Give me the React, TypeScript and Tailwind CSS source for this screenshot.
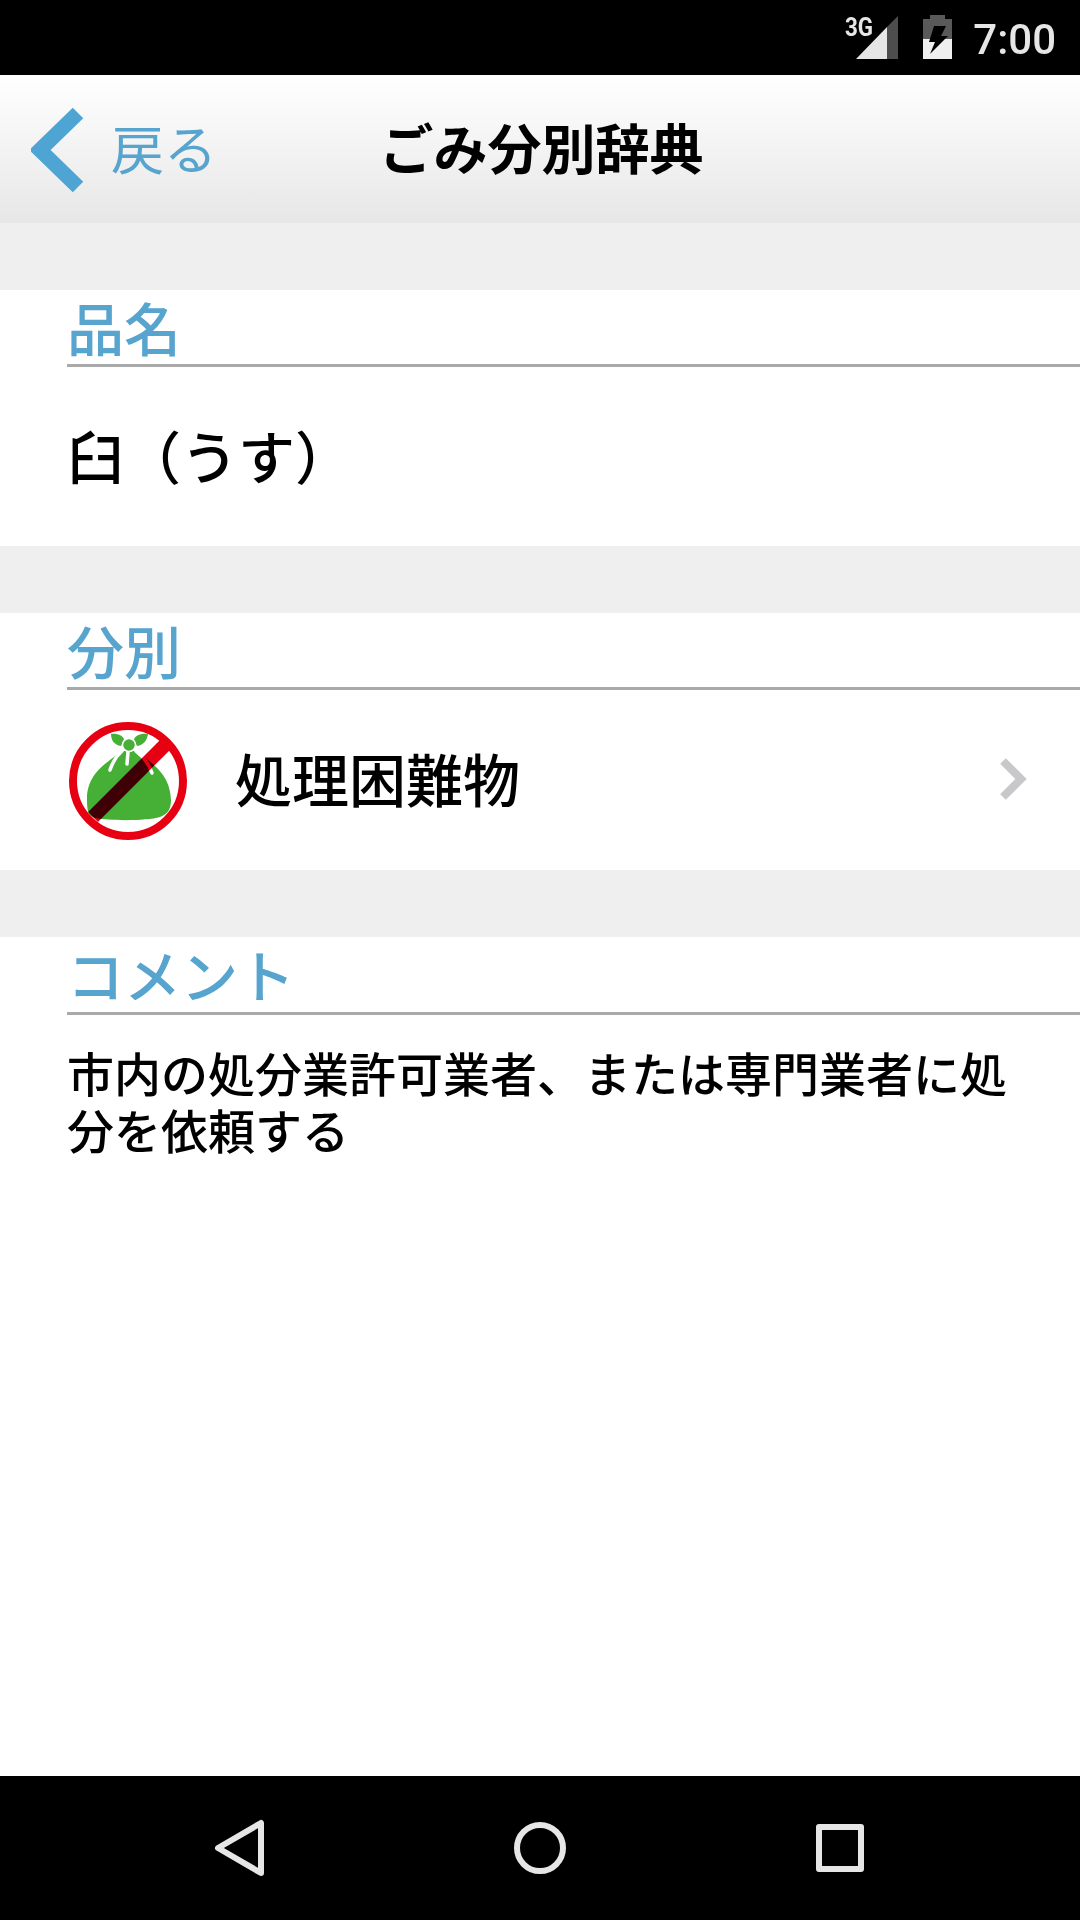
import type { ReactNode } from 'react';

interface SectionProps {
  title: string;
  children: ReactNode;
  className?: string;
}

function StatusBar() {
  return (
    <div className="flex h-[75px] shrink-0 items-start justify-end bg-black pr-[24px] font-['Roboto',sans-serif] text-[#e6e6e6]">
      <span className="mt-[14px] origin-left scale-x-[0.86] text-[26px] leading-[26px] font-bold">3G</span>
      <svg className="-ml-[21px] mt-[16px]" width="42" height="43" viewBox="0 0 42 43">
        <path d="M31 11 42 0V43H31Z" fill="#4d4d4d" />
        <path d="M0 43 31 11V43Z" fill="#e6e6e6" />
      </svg>
      <svg className="ml-[25px] mt-[15px]" width="29" height="44" viewBox="0 0 29 44">
        <path d="M7 0H22V4H29V24H0V4H7Z" fill="#595959" />
        <path d="M0 24H29V44H0Z" fill="#efefef" />
        <path d="M11 11H23L18 21H25L7 39L12 27H6Z" fill="#000" />
      </svg>
      <span className="ml-[21px] mt-[15px] text-[42px] leading-[50px] font-medium">7:00</span>
    </div>
  );
}

function Header() {
  return (
    <header className="grid h-[148px] shrink-0 grid-cols-[1fr_auto_1fr] items-center bg-linear-to-b from-white to-[#e7e7e7]">
      <button className="flex items-center text-[#57a4cf]">
        <svg className="ml-[31px] mt-[2px]" width="54" height="86" viewBox="0 0 54 86">
          <path d="M47 6 9 43 47 80" fill="none" stroke="#4ea5d3" strokeWidth="15" />
        </svg>
        <span className="ml-[26px] -mt-[3px] text-[53px] leading-none">戻る</span>
      </button>
      <h1 className="-mt-[5px] pl-[3px] text-[54px] leading-none font-bold">ごみ分別辞典</h1>
    </header>
  );
}

function Section({ title, children, className }: SectionProps) {
  return (
    <section className={className}>
      <div className="h-[67px] bg-[#efefef]" />
      <h2 className="ml-[67px] border-b-[3px] border-[#a9a9a9] pt-[8px] pb-[10px] text-[57px] leading-[56px] font-medium text-[#57a4cf]">
        {title}
      </h2>
      {children}
    </section>
  );
}

// Garbage bag with a prohibition sign over it
function UnprocessableIcon() {
  return (
    <svg className="-mt-px" width="120" height="120" viewBox="0 0 120 120">
      <circle cx="60" cy="60" r="55" fill="#fff" />
      <path
        d="M53 30C42 41 19 50 19 78C19 90 20 95 27 97C42 100 79 100 92 96C100 93 103 88 103 79C102 52 84 43 69 30Z"
        fill="#45b035"
      />
      <path d="M43 13C49 12 56 15 56 19L53 25C46 24 43 19 43 13Z" fill="#45b035" />
      <path d="M80 13C73 12 66 15 66 19L69 25C76 24 79 19 80 13Z" fill="#45b035" />
      <path d="M54 30Q46 37 42 49M60 31 59 43M68 30Q79 38 84 52" fill="none" stroke="#fff" strokeWidth="3.5" strokeLinecap="round" />
      <circle cx="61" cy="24" r="6.5" fill="#45b035" stroke="#fff" strokeWidth="1.5" />
      <path d="M25 96 98 23" stroke="#e60012" strokeWidth="14" className="mix-blend-multiply" />
      <circle cx="60" cy="60" r="55" fill="none" stroke="#e60012" strokeWidth="8" />
    </svg>
  );
}

function NavBar() {
  return (
    <nav className="flex h-[144px] shrink-0 items-center justify-between bg-black px-[210px]">
      <svg width="60" height="60" viewBox="0 0 60 60" fill="none" stroke="#e6e6e6" strokeWidth="6" strokeLinejoin="round">
        <path d="M51 5V55L8 30Z" />
      </svg>
      <svg width="60" height="60" viewBox="0 0 60 60" fill="none" stroke="#e6e6e6" strokeWidth="6">
        <circle cx="30" cy="30" r="23" />
      </svg>
      <svg width="60" height="60" viewBox="0 0 60 60" fill="none" stroke="#e6e6e6" strokeWidth="6" strokeLinejoin="round">
        <path d="M9 9H51V51H9Z" />
      </svg>
    </nav>
  );
}

export default function App() {
  return (
    <div className="flex h-[1920px] w-[1080px] flex-col bg-white font-['Noto_Sans_CJK_JP',sans-serif] text-black" lang="ja">
      <StatusBar />
      <Header />
      <main className="grow">
        <Section title="品名" className="h-[323px]">
          <p className="ml-[67px] pt-[59px] text-[57px] leading-[56px] font-medium">臼（うす）</p>
        </Section>
        <Section title="分別" className="h-[324px]">
          <div className="mt-[31px] flex h-[120px] items-center pl-[68px] pr-[50px]">
            <UnprocessableIcon />
            <p className="ml-[47px] -mt-[8px] text-[57px] leading-none font-medium">処理困難物</p>
            <svg className="-mt-[4px] ml-auto" width="34" height="48" viewBox="0 0 34 48">
              <path d="M7 6 25 24 7 42" fill="none" stroke="#c8c8ca" strokeWidth="8" />
            </svg>
          </div>
        </Section>
        <Section title="コメント" className="[&>h2]:pb-[11px]">
          <p className="ml-[67px] mt-[29px] w-[945px] text-[47px] leading-[56.5px] font-medium">
            市内の処分業許可業者、または専門業者に処分を依頼する
          </p>
        </Section>
      </main>
      <NavBar />
    </div>
  );
}
